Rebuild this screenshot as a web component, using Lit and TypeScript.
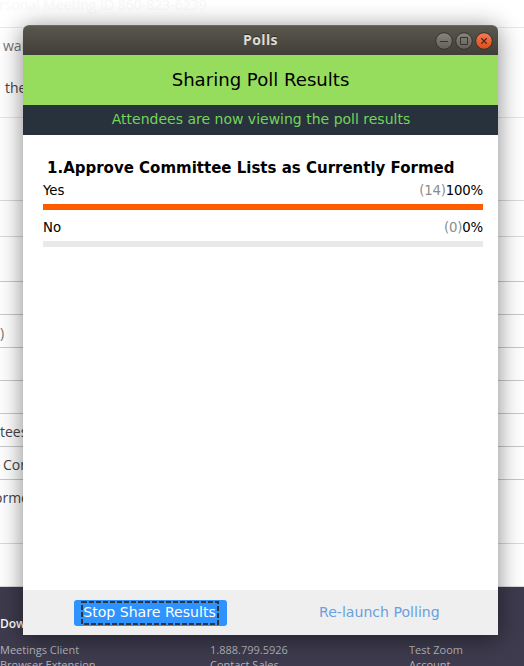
import { LitElement, html, css, svg } from "lit";
import { customElement, property } from "lit/decorators.js";

interface PollOption {
  label: string;
  votes: number;
  percent: number;
}

interface PageRow {
  height: number;
  tone?: "soft" | "faint";
  lines?: { text: string; x: number; top: number; muted?: boolean }[];
}

const OPTIONS: PollOption[] = [
  { label: "Yes", votes: 14, percent: 100 },
  { label: "No", votes: 0, percent: 0 },
];

const ROWS: PageRow[] = [
  { height: 90, tone: "faint", lines: [{ text: "wai", x: 3, top: 8, muted: true }, { text: "the", x: 5, top: 22 }] },
  { height: 83, tone: "soft" },
  { height: 36, tone: "soft" },
  { height: 45 },
  { height: 33 },
  { height: 33, lines: [{ text: ")", x: 0, top: 8, muted: true }] },
  { height: 33 },
  { height: 33 },
  { height: 33, lines: [{ text: "tees", x: 0, top: 8 }] },
  { height: 33, lines: [{ text: "Com", x: 3, top: 8 }] },
  { height: 64, tone: "soft", lines: [{ text: "ormed", x: -6, top: 8 }] },
  { height: 43, tone: "soft" },
];

@customElement("background-page")
export class BackgroundPage extends LitElement {
  static styles = css`
    :host {
      display: flex;
      flex-direction: column;
      height: 666px;
      overflow: hidden;
      background: #fff;
      font: 14px/20px "Open Sans", "Noto Sans", sans-serif;
      color: #444449;
      white-space: nowrap;
    }
    .heading {
      flex: none;
      height: 28px;
      box-sizing: border-box;
      border-bottom: 1px solid #e9e9e9;
      color: #f8f8f8;
      font-size: 14px;
      line-height: 9px;
      text-indent: -1px;
    }
    .row {
      box-sizing: border-box;
      flex: none;
      border-bottom: 1px solid #c8c8c8;
    }
    .soft { border-color: #d9d9d9; }
    .faint { border-color: #e6e6e6; }
    .line { height: 20px; }
    .muted { color: #747478; }
    .footer {
      flex: 1;
      display: grid;
      grid-template-columns: 210px 199px 1fr;
      background: #3d3b4d;
      color: #b4b4b8;
      font-size: 11px;
      line-height: 15px;
      padding-top: 29px;
    }
    .title {
      height: 26px;
      color: #fff;
      font-weight: 600;
      font-size: 12px;
    }
  `;

  render() {
    return html`
      <div class="heading">rsonal Meeting ID 860-823-6239</div>
      ${ROWS.map(
        (row) => html`<div class="row ${row.tone ?? ""}" style="height:${row.height}px">
          ${row.lines?.map(
            (l) => html`<div
              class="line ${l.muted ? "muted" : ""}"
              style="margin-left:${l.x}px;padding-top:${l.top}px"
            >${l.text}</div>`
          )}
        </div>`
      )}
      <div class="footer">
        <div><div class="title">Download</div>Meetings Client<br />Browser Extension</div>
        <div><div class="title"></div>1.888.799.5926<br />Contact Sales</div>
        <div><div class="title"></div>Test Zoom<br />Account</div>
      </div>
    `;
  }
}

@customElement("poll-option")
export class PollOptionRow extends LitElement {
  @property({ attribute: false }) option!: PollOption;

  static styles = css`
    :host {
      display: block;
      height: 37px;
      font-size: 13.3px;
      line-height: 22px;
    }
    .caption {
      display: flex;
      justify-content: space-between;
      height: 24px;
    }
    .figures { letter-spacing: -0.2px; }
    .votes { color: #8c8c8c; }
    .track { height: 6px; background: #e9e9e9; }
    .fill { height: 6px; background: #ff5c00; }
  `;

  render() {
    const { label, votes, percent } = this.option;
    return html`
      <div class="caption">
        <span>${label}</span>
        <span class="figures"><span class="votes">(${votes})</span>${percent}%</span>
      </div>
      <div class="track"><div class="fill" style="width:${percent}%"></div></div>
    `;
  }
}

@customElement("polls-window")
export class PollsWindow extends LitElement {
  static styles = css`
    :host {
      display: flex;
      flex-direction: column;
      width: 475px;
      height: 610px;
      border-radius: 6px 6px 0 0;
      background: #fff;
      color: #000;
      font-family: "DejaVu Sans", sans-serif;
      white-space: nowrap;
      box-shadow: 0 3px 24px rgba(0, 0, 0, 0.48);
    }
    .titlebar {
      box-sizing: border-box;
      height: 30px;
      display: grid;
      grid-template-columns: 1fr auto 1fr;
      align-items: center;
      border-radius: 6px 6px 0 0;
      border-top: 1px solid #6b6961;
      background: linear-gradient(#5a574e, #403e38);
      color: #dfdbd2;
      font: bold 14px/20px "Open Sans", "Noto Sans", sans-serif;
      letter-spacing: 0.4px;
      text-shadow: 0 -1px #2c2b27;
    }
    .name { grid-column: 2; padding-bottom: 1px; }
    .controls { justify-self: end; display: block; margin-right: 4px; }
    .banner {
      height: 50px;
      line-height: 50px;
      background: #97dd5d;
      text-align: center;
      font-size: 18.1px;
    }
    .status {
      height: 30px;
      line-height: 29px;
      background: #28323c;
      color: #73d45a;
      text-align: center;
      font-size: 14px;
      text-indent: 1px;
    }
    .body { flex: 1; padding: 22px 15px 0 20px; }
    .question {
      height: 23px;
      line-height: 22px;
      padding-left: 4px;
      font-size: 15px;
      font-weight: bold;
    }
    .actions {
      height: 45px;
      display: grid;
      grid-template-columns: 51px 153px 92px 121px;
      align-items: center;
      background: #efefef;
      font-size: 14.1px;
    }
    .stop {
      grid-column: 2;
      box-sizing: border-box;
      height: 26px;
      display: grid;
      place-items: center;
      padding-right: 2px;
      border-radius: 3px;
      background: #2e93ff;
      color: #fff;
    }
    .focus { display: block; }
    .stack { display: grid; place-items: center; }
    .stack > * { grid-area: 1 / 1; }
    .stack span { padding-bottom: 2px; }
    .relaunch { grid-column: 4; color: #68a0e0; line-height: 20px; padding-bottom: 2px; }
  `;

  private controls() {
    return svg`
      <defs>
        <linearGradient id="grey" x2="0" y2="1"><stop stop-color="#87847b" /><stop offset="1" stop-color="#62605a" /></linearGradient>
        <linearGradient id="red" x2="0" y2="1"><stop stop-color="#f57c59" /><stop offset="1" stop-color="#df4b16" /></linearGradient>
      </defs>
      <g stroke="#34332e">
        <circle cx="10" cy="10" r="8.3" fill="url(#grey)" />
        <circle cx="30" cy="10" r="8.3" fill="url(#grey)" />
        <circle cx="50" cy="10" r="8.3" fill="url(#red)" />
      </g>
      <path d="M6 10.5h8M26.5 6.5h7v7h-7z" fill="none" stroke="#36352f" />
      <path d="M47.3 7.3l5.4 5.4M52.7 7.3l-5.4 5.4" stroke="#4b2a18" stroke-width="1.3" />
    `;
  }

  render() {
    return html`
      <div class="titlebar">
        <span class="name">Polls</span>
        <svg class="controls" width="60" height="20" viewBox="0 0 60 20">${this.controls()}</svg>
      </div>
      <div class="banner">Sharing Poll Results</div>
      <div class="status">Attendees are now viewing the poll results</div>
      <div class="body">
        <div class="question">1.Approve Committee Lists as Currently Formed</div>
        ${OPTIONS.map((o) => html`<poll-option .option=${o}></poll-option>`)}
      </div>
      <div class="actions">
        <div class="stop">
          <div class="stack">
            <svg class="focus" width="138" height="24">
              <rect x="1" y="1" width="136" height="22" fill="none" stroke="#303338" stroke-width="2" stroke-dasharray="5 2" />
            </svg>
            <span>Stop Share Results</span>
          </div>
        </div>
        <span class="relaunch">Re-launch Polling</span>
      </div>
    `;
  }
}

@customElement("app-root")
export class AppRoot extends LitElement {
  static styles = css`
    :host {
      display: grid;
      width: 524px;
      height: 666px;
      overflow: hidden;
    }
    background-page, polls-window { grid-area: 1 / 1; }
    polls-window { margin: 25px 0 0 23px; }
  `;

  render() {
    return html`
      <background-page></background-page>
      <polls-window></polls-window>
    `;
  }
}
